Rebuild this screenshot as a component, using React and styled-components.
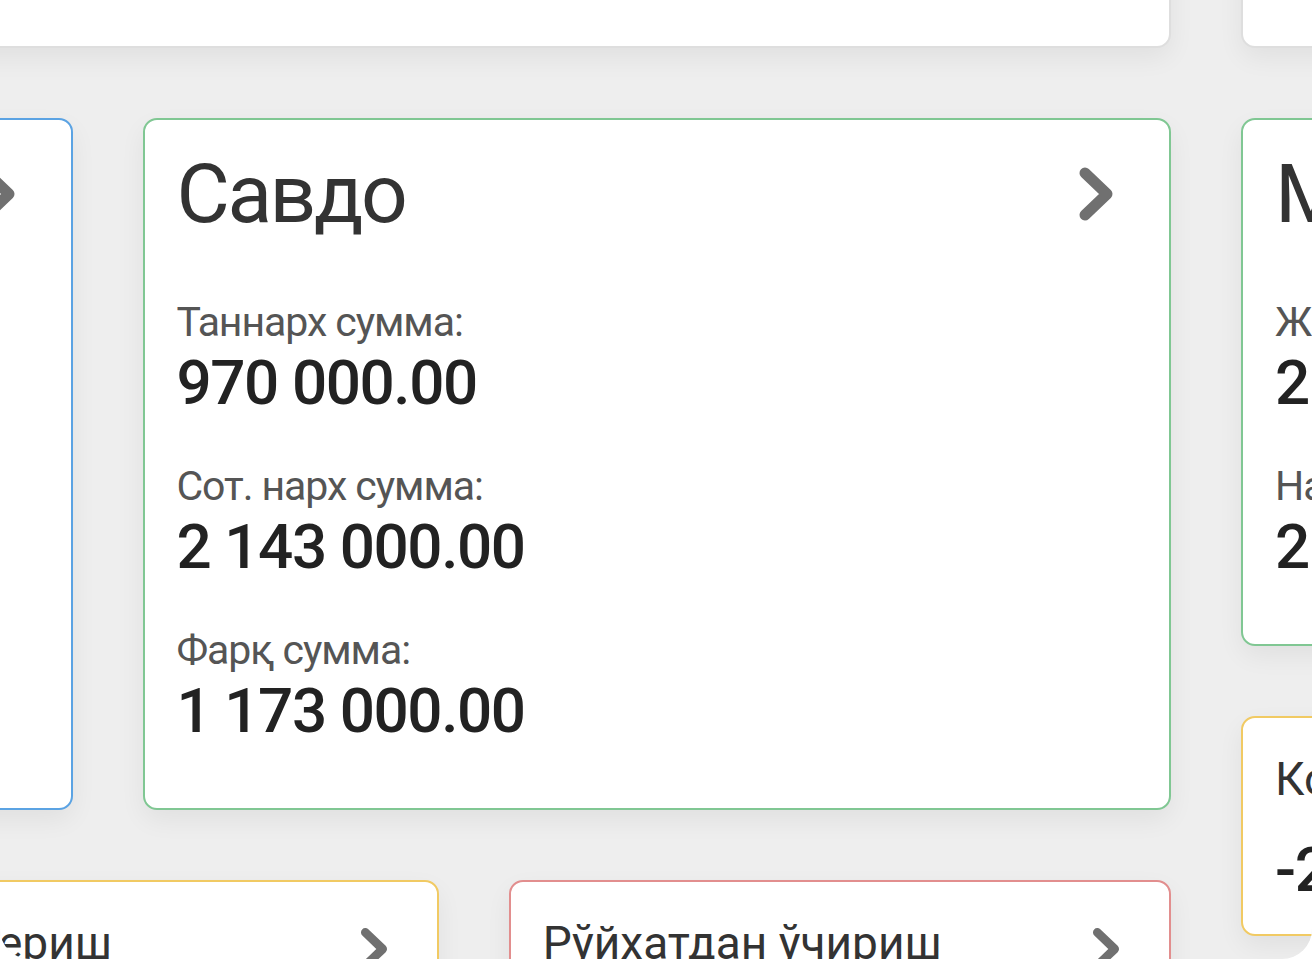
import React from "react";
import styled, { createGlobalStyle } from "styled-components";

const Global = createGlobalStyle`
  html, body { margin: 0; padding: 0; background: #ffffff; }
  body { font-family: Roboto, "Noto Sans", "Liberation Sans", sans-serif; }
`;

const accents = {
  blue: "#5ba3e3",
  green: "#80c793",
  yellow: "#f1ca63",
  red: "#e28e8e",
  plain: "#dedede",
};

const Viewport = styled.div`
  width: 1312px;
  height: 959px;
  overflow: hidden;
  background: #eeeeee;
  border-radius: 0 0 30px 30px;
`;

const Canvas = styled.div`
  display: flex;
  gap: 70px;
  margin: -102px 0 0 -956px;
  align-items: flex-start;
`;

const MainCol = styled.div`
  width: 2127px;
  flex: none;
  display: flex;
  flex-direction: column;
  gap: 70px;
`;

const SideCol = styled.div`
  width: 1028px;
  flex: none;
  display: flex;
  flex-direction: column;
  gap: 70px;
`;

const Row = styled.div`
  display: grid;
  grid-template-columns: repeat(${(p) => p.$cols}, 1fr);
  gap: 70px;
  align-items: start;
`;

const Card = styled.div`
  box-sizing: border-box;
  background: #ffffff;
  border: 2px solid ${(p) => accents[p.$tone]};
  border-radius: 14px;
  box-shadow: 0 10px 26px rgba(0, 0, 0, 0.06);
  padding: ${(p) => (p.$small ? "32px 35px 27px 32px" : "26px 35px 60px 32px")};
  height: ${(p) => (p.$height ? `${p.$height}px` : "auto")};
`;

const Head = styled.div`
  display: flex;
  align-items: center;
  justify-content: space-between;
`;

const Title = styled.div`
  font-size: ${(p) => (p.$small ? 46 : 82)}px;
  line-height: ${(p) => (p.$small ? 54 : 96)}px;
  letter-spacing: ${(p) => (p.$small ? "0" : "-0.03em")};
  color: #333333;
  white-space: nowrap;
`;

const Body = styled.div`
  margin-top: ${(p) => (p.$small ? 25 : 56)}px;
  display: flex;
  flex-direction: column;
  gap: 42px;
`;

const Label = styled.div`
  font-size: 41px;
  line-height: 48px;
  letter-spacing: -0.026em;
  color: #555555;
  white-space: nowrap;
`;

const Value = styled.div`
  font-size: 62px;
  line-height: 74px;
  letter-spacing: -0.023em;
  font-weight: 500;
  color: #222222;
  white-space: nowrap;
`;

const ChevronBox = styled.span`
  display: inline-flex;
  margin-right: ${(p) => (p.$small ? 13 : 19)}px;
  margin-top: ${(p) => (p.$small ? 12 : 0)}px;
`;

const Chevron = ({ small }) => {
  const w = small ? 30 : 38;
  const h = small ? 46 : 58;
  return (
    <ChevronBox $small={small}>
      <svg width={w} height={h} viewBox="0 0 38 58">
        <polyline
          points="8,8 30,29 8,50"
          fill="none"
          stroke="#707070"
          strokeWidth="11"
          strokeLinecap="round"
          strokeLinejoin="round"
        />
      </svg>
    </ChevronBox>
  );
};

const StatCard = ({ tone, title, items }) => (
  <Card $tone={tone}>
    <Head>
      <Title>{title}</Title>
      <Chevron />
    </Head>
    <Body>
      {items.map((it) => (
        <div key={it.label}>
          <Label>{it.label}</Label>
          <Value>{it.value}</Value>
        </div>
      ))}
    </Body>
  </Card>
);

const SmallCard = ({ tone, title, value }) => (
  <Card $tone={tone} $small>
    <Head>
      <Title $small>{title}</Title>
      <Chevron small />
    </Head>
    {value && (
      <Body $small>
        <Value>{value}</Value>
      </Body>
    )}
  </Card>
);

export default function App() {
  return (
    <>
      <Global />
      <Viewport>
        <Canvas>
          <MainCol>
            <Card $tone="plain" $height={150} />
            <Row $cols={2}>
              <StatCard
                tone="blue"
                title="Кирим"
                items={[
                  { label: "Таннарх сумма:", value: "1 250 000.00" },
                  { label: "Сот. нарх сумма:", value: "2 480 000.00" },
                  { label: "Фарқ сумма:", value: "1 230 000.00" },
                ]}
              />
              <StatCard
                tone="green"
                title="Савдо"
                items={[
                  { label: "Таннарх сумма:", value: "970 000.00" },
                  { label: "Сот. нарх сумма:", value: "2 143 000.00" },
                  { label: "Фарқ сумма:", value: "1 173 000.00" },
                ]}
              />
            </Row>
            <Row $cols={3}>
              <SmallCard tone="blue" title="Қайтариш" />
              <SmallCard tone="yellow" title="Қарзга бериш" />
              <SmallCard tone="red" title="Рўйхатдан ўчириш" />
            </Row>
          </MainCol>
          <SideCol>
            <Card $tone="plain" $height={150} />
            <StatCard
              tone="green"
              title="Мижозлар"
              items={[
                { label: "Жами сумма:", value: "2 143 000.00" },
                { label: "Нақд сумма:", value: "2 000 000.00" },
              ]}
            />
            <SmallCard tone="yellow" title="Контрагентлар" value="-2 350 000.00" />
          </SideCol>
        </Canvas>
      </Viewport>
    </>
  );
}
